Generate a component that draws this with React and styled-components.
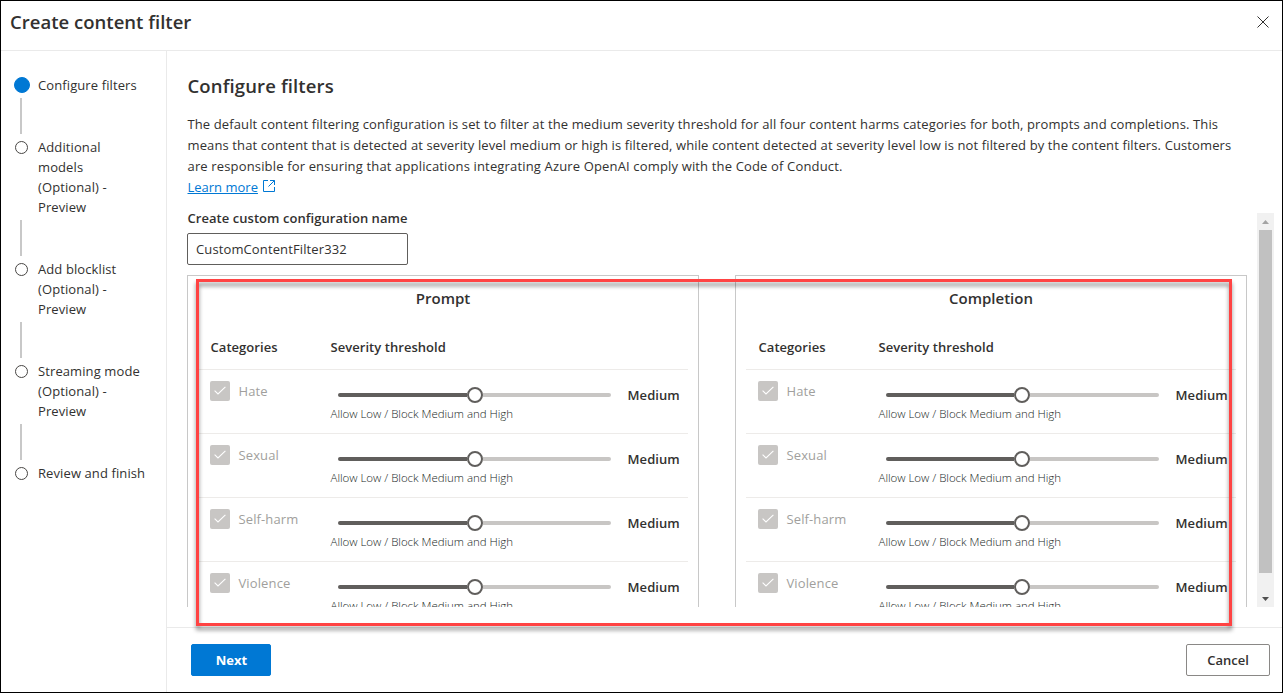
import React from "react";
import styled, { createGlobalStyle } from "styled-components";

const Global = createGlobalStyle`
  *, *::before, *::after { box-sizing: border-box; }
  body { margin: 0; background: #fff; }
  button, input { font: inherit; letter-spacing: inherit; }
`;

const Dialog = styled.div`
  position: relative;
  display: flex;
  flex-direction: column;
  width: 1283px;
  height: 693px;
  overflow: hidden;
  border: 1px solid #000;
  background: #fff;
  color: #323130;
  font-family: "Open Sans", "Noto Sans", sans-serif;
  font-size: 13px;
  line-height: 20px;
`;

const Header = styled.header`
  display: flex;
  align-items: center;
  justify-content: space-between;
  flex: none;
  height: 50px;
  padding: 0 12px 8px 9px;
  border-bottom: 1px solid #eaeaea;
`;

const Title = styled.h1`
  margin: 0;
  font-size: 18.5px;
  font-weight: 600;
  line-height: 26px;
  white-space: nowrap;
  letter-spacing: ${(p) => p.$tracking}px;
`;

const CloseButton = styled.button`
  display: flex;
  padding: 0;
  border: 0;
  background: none;
  color: #323130;
`;

const Body = styled.div`
  display: flex;
  flex: 1;
  min-height: 0;
`;

const Sidebar = styled.nav`
  flex: none;
  width: 166px;
  padding: 24px 0 0 13px;
  border-right: 1px solid #eaeaea;
`;

const Step = styled.div`
  display: grid;
  grid-template-columns: 16px 1fr;
  column-gap: 8px;
  white-space: pre-line;
  letter-spacing: 0.1px;
`;

const Marker = styled.span`
  width: ${(p) => (p.$active ? 16 : 13)}px;
  height: ${(p) => (p.$active ? 16 : 13)}px;
  margin: ${(p) => (p.$active ? "2px 0 0" : "4px 0 0 1px")};
  border: 1px solid ${(p) => (p.$active ? "#0078d4" : "#484644")};
  border-radius: 50%;
  background: ${(p) => (p.$active ? "#0078d4" : "#fff")};
`;

const Connector = styled.div`
  width: 2px;
  height: 36px;
  margin: 3px 0 3px 6px;
  background: #c8c8c8;
`;

const Main = styled.main`
  display: flex;
  flex-direction: column;
  flex: 1;
  min-width: 0;
`;

const Intro = styled.section`
  flex: none;
  height: 157px;
  padding: 22px 0 0 20.5px;
`;

const Description = styled.p`
  margin: 15px 0 0;
  line-height: 21px;
`;

const Line = styled.span`
  display: block;
  white-space: nowrap;
  letter-spacing: ${(p) => p.$tracking}px;
`;

const LearnMore = styled.a`
  display: flex;
  align-items: center;
  gap: 5px;
  line-height: 21px;
  color: #0078d4;
  text-decoration: none;
  span { text-decoration: underline; text-underline-offset: 1px; }
  svg { margin-bottom: 3px; }
`;

const ScrollArea = styled.section`
  display: flex;
  justify-content: space-between;
  flex: 1;
  min-height: 0;
  margin: 0 8px 20px 20px;
  overflow: hidden;
`;

const ScrollContent = styled.div`
  width: 1060px;
`;

const Label = styled.label`
  display: block;
  height: 25px;
  padding-left: 0.5px;
  font-weight: 600;
  line-height: 20px;
  letter-spacing: 0.05px;
`;

const NameInput = styled.input`
  display: block;
  width: 221px;
  height: 32px;
  padding: 0 8px;
  border: 1px solid #605e5c;
  border-radius: 2px;
  background: #fff;
  color: #323130;
  letter-spacing: 0.12px;
  outline: none;
`;

const Cards = styled.div`
  display: flex;
  justify-content: space-between;
  margin-top: 10px;
`;

const Card = styled.article`
  width: 512px;
  height: 360px;
  padding: 0 10px;
  border: 1px solid #c8c8c8;
`;

const CardTitle = styled.h2`
  margin: 0;
  padding: 12px 0 1px;
  font-size: 15px;
  font-weight: 600;
  line-height: 20px;
  text-align: center;
`;

const ColumnHeads = styled.div`
  display: grid;
  grid-template-columns: 120px 1fr;
  height: 60px;
  padding: 28px 0 0 12.5px;
  font-weight: 600;
  letter-spacing: 0.05px;
`;

const Row = styled.div`
  display: grid;
  grid-template-columns: 120px 297px 1fr;
  height: 64px;
  padding-left: 12px;
  border-top: 1px solid #edebe9;
`;

const Category = styled.div`
  display: flex;
  gap: 8.5px;
  padding-top: 11px;
  color: #a19f9d;
  letter-spacing: 0.12px;
`;

const Checkbox = styled.span`
  display: flex;
  align-items: center;
  justify-content: center;
  width: 20px;
  height: 20px;
  border-radius: 2px;
  background: #c8c6c4;
`;

const Threshold = styled.div`
  padding-top: 17px;
`;

const Track = styled.div`
  display: flex;
  align-items: center;
  width: 273px;
  height: 16px;
  margin-left: 8px;
`;

const Fill = styled.span`
  width: ${(p) => p.$width}px;
  height: 4px;
  border-radius: ${(p) => (p.$active ? "2px 0 0 2px" : "0 2px 2px 0")};
  background: ${(p) => (p.$active ? "#605e5c" : "#c8c6c4")};
`;

const Thumb = styled.span`
  width: 16px;
  height: 16px;
  border: 2px solid #605e5c;
  border-radius: 50%;
  background: #fff;
`;

const Hint = styled.div`
  padding: 1px 0 0 0.5px;
  font-size: 11.5px;
  font-weight: 300;
  line-height: 20px;
  white-space: nowrap;
  color: #201f1e;
  letter-spacing: -0.03px;
`;

const Level = styled.strong`
  padding: 15px 0 0 0.5px;
  font-weight: 600;
  letter-spacing: 0.08px;
`;

const Scrollbar = styled.div`
  display: flex;
  flex-direction: column;
  align-items: center;
  width: 17px;
  margin-top: 5px;
  background: #f1f1f1;
`;

const ArrowBox = styled.span`
  display: flex;
  align-items: center;
  justify-content: center;
  height: 17px;

  &:last-child { margin-top: auto; }
`;

const ScrollThumb = styled.span`
  width: 13px;
  height: 343px;
  background: #c1c1c1;
`;

const Footer = styled.footer`
  display: flex;
  justify-content: space-between;
  flex: none;
  height: 65px;
  padding: 16px 12px 0 24px;
  border-top: 1px solid #eaeaea;
`;

const Button = styled.button`
  width: ${(p) => (p.$primary ? 80 : 84)}px;
  height: 32px;
  padding: ${(p) => (p.$primary ? "0 0 0 1px" : 0)};
  border: 1px solid ${(p) => (p.$primary ? "#0078d4" : "#8a8886")};
  border-radius: 2px;
  background: ${(p) => (p.$primary ? "#0078d4" : "#fff")};
  color: ${(p) => (p.$primary ? "#fff" : "#323130")};
  font-weight: ${(p) => (p.$primary ? 700 : 600)};
`;

const Highlight = styled.div`
  position: absolute;
  left: 195px;
  top: 278px;
  width: 1036px;
  height: 347px;
  border: 3px solid #ff4343;
  filter: drop-shadow(0 4px 2px rgba(0, 0, 0, 0.45));
  pointer-events: none;
`;

const steps = [
  "Configure filters",
  "Additional\nmodels\n(Optional) -\nPreview",
  "Add blocklist\n(Optional) -\nPreview",
  "Streaming mode\n(Optional) -\nPreview",
  "Review and finish",
];

const categories = ["Hate", "Sexual", "Self-harm", "Violence"];

function FilterCard({ title, fill }) {
  return (
    <Card>
      <CardTitle>{title}</CardTitle>
      <ColumnHeads>
        <span>Categories</span>
        <span>Severity threshold</span>
      </ColumnHeads>
      {categories.map((name) => (
        <Row key={name}>
          <Category>
            <Checkbox>
              <svg width="12" height="10" viewBox="0 0 12 10" fill="none" stroke="#fff" strokeWidth="1.1">
                <path d="M0.6 4.6 4 8 11.4 0.8" />
              </svg>
            </Checkbox>
            <span>{name}</span>
          </Category>
          <Threshold>
            <Track>
              <Fill $active $width={fill} />
              <Thumb />
              <Fill $width={257 - fill} />
            </Track>
            <Hint>Allow Low / Block Medium and High</Hint>
          </Threshold>
          <Level>Medium</Level>
        </Row>
      ))}
    </Card>
  );
}

export default function App() {
  return (
    <>
      <Global />
      <Dialog>
        <Header>
          <Title $tracking={0.02}>Create content filter</Title>
          <CloseButton aria-label="Close">
            <svg width="14" height="14" viewBox="0 0 14 14" stroke="currentColor" strokeWidth="1">
              <path d="M1.5 1.5l11 11M12.5 1.5l-11 11" />
            </svg>
          </CloseButton>
        </Header>
        <Body>
          <Sidebar>
            {steps.map((label, i) => (
              <React.Fragment key={label}>
                {i > 0 && <Connector />}
                <Step>
                  <Marker $active={i === 0} />
                  <span>{label}</span>
                </Step>
              </React.Fragment>
            ))}
          </Sidebar>
          <Main>
            <Intro>
              <Title as="h2" $tracking={0.13}>Configure filters</Title>
              <Description>
                <Line $tracking={0.115}>The default content filtering configuration is set to filter at the medium severity threshold for all four content harms categories for both, prompts and completions. This</Line>
                <Line $tracking={0.115}>means that content that is detected at severity level medium or high is filtered, while content detected at severity level low is not filtered by the content filters. Customers</Line>
                <Line $tracking={0.155}>are responsible for ensuring that applications integrating Azure OpenAI comply with the Code of Conduct.</Line>
              </Description>
              <LearnMore>
                <span>Learn more</span>
                <svg width="12" height="12" viewBox="0 0 12 12" fill="none" stroke="currentColor" strokeWidth="1">
                  <path d="M5 .5H.5v11h11V7M7 .5h4.5V5M11.5.5 5.5 6.5" />
                </svg>
              </LearnMore>
            </Intro>
            <ScrollArea>
              <ScrollContent>
                <Label htmlFor="config-name">Create custom configuration name</Label>
                <NameInput id="config-name" defaultValue="CustomContentFilter332" />
                <Cards>
                  <FilterCard title="Prompt" fill={129} />
                  <FilterCard title="Completion" fill={128} />
                </Cards>
              </ScrollContent>
              <Scrollbar>
                <ArrowBox>
                  <svg width="7" height="4" viewBox="0 0 7 4" fill="#a3a3a3"><path d="M0 4 3.5 0 7 4z" /></svg>
                </ArrowBox>
                <ScrollThumb />
                <ArrowBox>
                  <svg width="7" height="4" viewBox="0 0 7 4" fill="#505050"><path d="M0 0 3.5 4 7 0z" /></svg>
                </ArrowBox>
              </Scrollbar>
            </ScrollArea>
            <Footer>
              <Button $primary>Next</Button>
              <Button>Cancel</Button>
            </Footer>
          </Main>
        </Body>
        <Highlight />
      </Dialog>
    </>
  );
}
